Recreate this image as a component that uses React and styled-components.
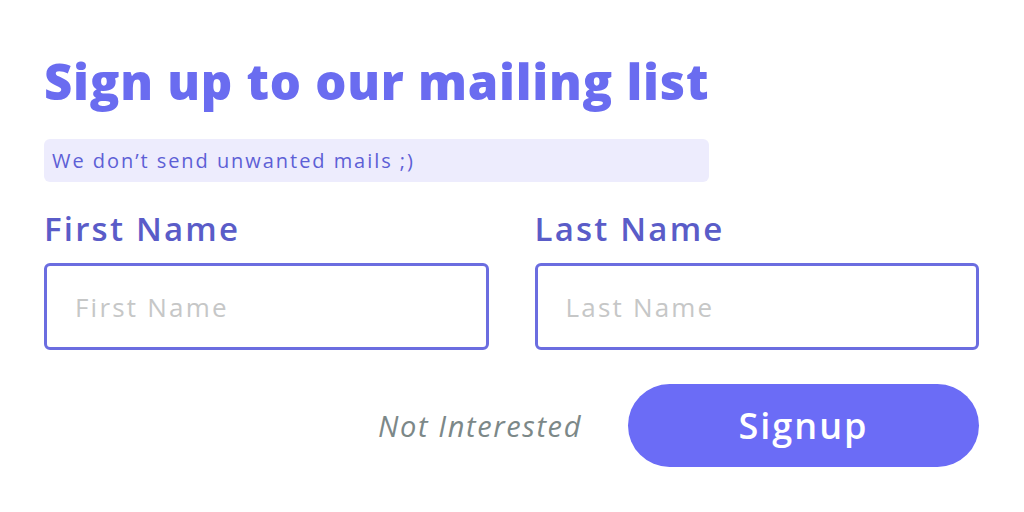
import React from "react";
import styled, { createGlobalStyle } from "styled-components";

const GlobalStyle = createGlobalStyle`
  html, body {
    margin: 0;
    padding: 0;
    background: #ffffff;
    font-family: "Open Sans", "Noto Sans", sans-serif;
  }
  * { box-sizing: border-box; }
`;

const Page = styled.div`
  width: 1024px;
  height: 512px;
  padding: 50px 45px 0 44px;
  display: flex;
  flex-direction: column;
`;

const Title = styled.h1`
  margin: 0;
  font-family: "Open Sans", sans-serif;
  font-weight: 800;
  font-size: 49px;
  line-height: 62px;
  color: #6a6cf0;
  letter-spacing: 0.75px;
`;

const Note = styled.div`
  margin-top: 27px;
  width: 665px;
  height: 43px;
  border-radius: 6px;
  background: #edecfd;
  color: #5d5fd6;
  font-size: 20px;
  letter-spacing: 1.95px;
  display: flex;
  align-items: center;
  padding-left: 8px;
`;

const Fields = styled.div`
  margin-top: 25px;
  display: grid;
  grid-template-columns: 1fr 1fr;
  column-gap: 46px;
`;

const Field = styled.label`
  display: flex;
  flex-direction: column;
  gap: 12px;
`;

const Label = styled.span`
  font-size: 33px;
  font-weight: 600;
  line-height: 44px;
  letter-spacing: 2.2px;
  color: #5a5cc8;
`;

const Input = styled.input`
  height: 87px;
  border: 3px solid #6b6de0;
  border-radius: 6px;
  padding: 0 28px;
  font-family: inherit;
  font-size: 26px;
  letter-spacing: 2.2px;
  color: #333;
  outline: none;
  &::placeholder { color: #c6c7c7; }
`;

const Actions = styled.div`
  margin-top: 34px;
  display: flex;
  justify-content: flex-end;
  align-items: center;
  gap: 46px;
`;

const Skip = styled.button`
  border: none;
  background: none;
  padding: 0;
  font-family: inherit;
  font-style: italic;
  font-size: 29px;
  letter-spacing: 1.6px;
  color: #7c8888;
  cursor: pointer;
`;

const Submit = styled.button`
  width: 351px;
  height: 83px;
  border: none;
  border-radius: 42px;
  background: #6b6cf6;
  color: #ffffff;
  font-family: inherit;
  font-weight: 600;
  font-size: 36px;
  letter-spacing: 2px;
  cursor: pointer;
`;

export default function App() {
  return (
    <>
      <GlobalStyle />
      <Page>
        <Title>Sign up to our mailing list</Title>
        <Note>We don’t send unwanted mails ;)</Note>
        <Fields>
          <Field>
            <Label>First Name</Label>
            <Input placeholder="First Name" />
          </Field>
          <Field>
            <Label>Last Name</Label>
            <Input placeholder="Last Name" />
          </Field>
        </Fields>
        <Actions>
          <Skip>Not Interested</Skip>
          <Submit>Signup</Submit>
        </Actions>
      </Page>
    </>
  );
}
